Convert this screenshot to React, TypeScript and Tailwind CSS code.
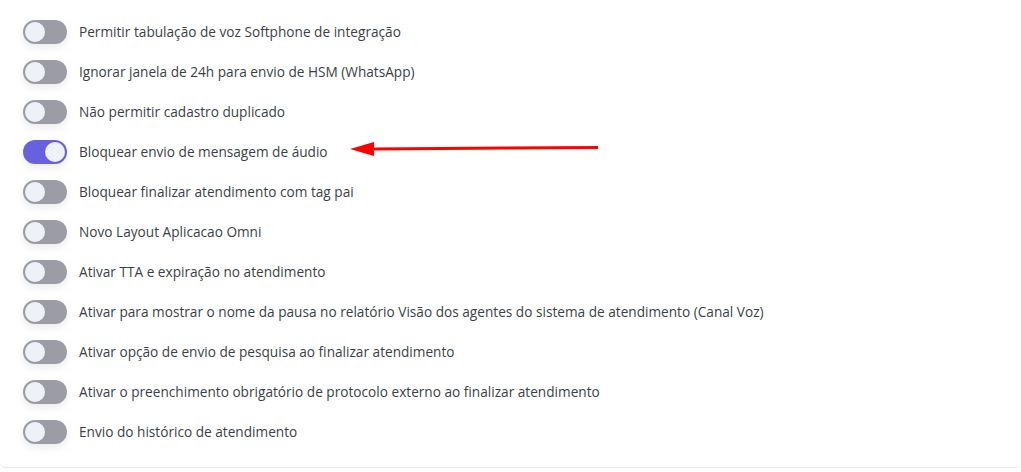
import React, { useState } from 'react';

const initial = [
  { label: 'Permitir tabulação de voz Softphone de integração', on: false },
  { label: 'Ignorar janela de 24h para envio de HSM (WhatsApp)', on: false },
  { label: 'Não permitir cadastro duplicado', on: false },
  { label: 'Bloquear envio de mensagem de áudio', on: true },
  { label: 'Bloquear finalizar atendimento com tag pai', on: false },
  { label: 'Novo Layout Aplicacao Omni', on: false },
  { label: 'Ativar TTA e expiração no atendimento', on: false },
  { label: 'Ativar para mostrar o nome da pausa no relatório Visão dos agentes do sistema de atendimento (Canal Voz)', on: false },
  { label: 'Ativar opção de envio de pesquisa ao finalizar atendimento', on: false },
  { label: 'Ativar o preenchimento obrigatório de protocolo externo ao finalizar atendimento', on: false },
  { label: 'Envio do histórico de atendimento', on: false },
];

const Toggle: React.FC<{ on: boolean; onClick: () => void }> = ({ on, onClick }) => (
  <button
    type="button"
    onClick={onClick}
    className={`relative w-[44px] h-[24px] rounded-full shrink-0 shadow-[0_4px_8px_rgba(0,0,0,0.08)] ${on ? 'bg-[#6761e0]' : 'bg-[#9b9ca6]'}`}
  >
    <span
      className={`absolute top-[2px] w-[20px] h-[20px] rounded-full bg-[#eef1f8] ${on ? 'left-[22px]' : 'left-[2px]'}`}
    />
  </button>
);

const App: React.FC = () => {
  const [items, setItems] = useState(initial);

  const toggle = (i: number) =>
    setItems(items.map((it, idx) => (idx === i ? { ...it, on: !it.on } : it)));

  return (
    <div className="w-[1021px] h-[472px] bg-white overflow-hidden" style={{ fontFamily: '"Open Sans", sans-serif' }}>
      <div className="h-[468px] border-b border-[#e3e8ef] rounded-b-md pt-[20px] pl-[23px] flex flex-col gap-[16px]">
        {items.map((it, i) => (
          <div key={i} className="flex items-center gap-[12px] h-[24px]">
            <Toggle on={it.on} onClick={() => toggle(i)} />
            <span className="text-[13.65px] text-[#3a3f47] whitespace-nowrap">{it.label}</span>
            {i === 3 && (
              <svg width="250" height="18" viewBox="0 0 250 18" className="ml-[10px] -mt-[4px]">
                <polygon points="0,8 24,1 24,15" fill="#ff0000" />
                <line x1="22" y1="8" x2="248" y2="6.5" stroke="#ff0000" strokeWidth="3" />
              </svg>
            )}
          </div>
        ))}
      </div>
    </div>
  );
};

export default App;
